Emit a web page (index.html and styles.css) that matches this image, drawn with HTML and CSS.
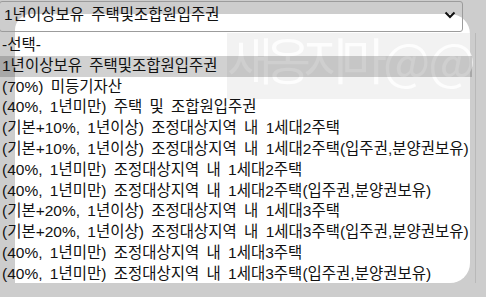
FILE: index.html
```html
<!DOCTYPE html>
<html>
  <head>
    <link rel="stylesheet" href="styles.css">
  </head>
  <body>
    <div class="card"></div>
    <div class="scroll-line"></div>

    <div class="select">
      <span class="select-value">1년이상보유 주택및조합원입주권</span>
      <svg class="chevron" width="12" height="8" viewBox="0 0 12 8">
        <path d="M1.5 1.5 L6 6 L10.5 1.5" fill="none" stroke="#111" stroke-width="2" />
      </svg>
    </div>

    <div class="watermark">새옹지마<span class="at">@@</span></div>

    <ul class="menu">
      <li>-선택-</li>
      <li class="selected">1년이상보유 주택및조합원입주권</li>
      <li>(70%) 미등기자산</li>
      <li>(40%, 1년미만) 주택 및 조합원입주권</li>
      <li>(기본+10%, 1년이상) 조정대상지역 내 1세대2주택</li>
      <li>(기본+10%, 1년이상) 조정대상지역 내 1세대2주택(입주권,분양권보유)</li>
      <li>(40%, 1년미만) 조정대상지역 내 1세대2주택</li>
      <li>(40%, 1년미만) 조정대상지역 내 1세대2주택(입주권,분양권보유)</li>
      <li>(기본+20%, 1년이상) 조정대상지역 내 1세대3주택</li>
      <li>(기본+20%, 1년이상) 조정대상지역 내 1세대3주택(입주권,분양권보유)</li>
      <li>(40%, 1년미만) 조정대상지역 내 1세대3주택</li>
      <li>(40%, 1년미만) 조정대상지역 내 1세대3주택(입주권,분양권보유)</li>
    </ul>
  </body>
</html>
```

FILE: styles.css
```css
body {
  font-family: "Liberation Sans", "Noto Sans CJK KR", sans-serif;
  font-size: 15.5px;
  word-spacing: 3px;
  color: #111;
  margin: 0;
  padding: 0;
  width: 486px;
  height: 297px;
  overflow: hidden;
  position: relative;
  background-color: #cdcdcd;
}

.card {
  margin: 14px 0 0 15px;
  width: 455px;
  height: 269px;
  background-color: #fff;
  border-radius: 16px 20px 20px 0;
}

.scroll-line {
  position: absolute;
  left: 475px;
  top: 33px;
  width: 1px;
  height: 250px;
  background-color: #b9b9b9;
}

.select {
  position: absolute;
  left: -1px;
  top: 1px;
  width: 464px;
  height: 31px;
  box-sizing: border-box;
  border: 1px solid #9c9c9c;
  border-radius: 3px;
  display: flex;
  align-items: center;
  justify-content: space-between;
  padding: 0 6px 0 4px;
}

.select-value {
  line-height: 20px;
  margin-top: -3px;
}

.chevron {
  margin-top: -4px;
}

.watermark {
  position: absolute;
  left: 227px;
  top: 33px;
  width: 243px;
  height: 66px;
  background-color: rgba(0, 0, 0, 0.05);
  color: rgba(255, 255, 255, 0.8);
  font-family: "Noto Sans CJK KR", sans-serif;
  font-size: 50px;
  letter-spacing: -8px;
  line-height: 50px;
  word-spacing: 0;
  white-space: nowrap;
}

.watermark .at {
  letter-spacing: -2px;
  margin-left: 4px;
}

.menu {
  position: absolute;
  left: 0;
  top: 35px;
  width: 472px;
  margin: 0;
  padding: 0;
  list-style: none;
}

.menu li {
  height: 20.8px;
  line-height: 20.8px;
  padding-left: 2px;
  white-space: nowrap;
}

.menu li.selected {
  background-color: rgba(0, 0, 0, 0.18);
}
```
